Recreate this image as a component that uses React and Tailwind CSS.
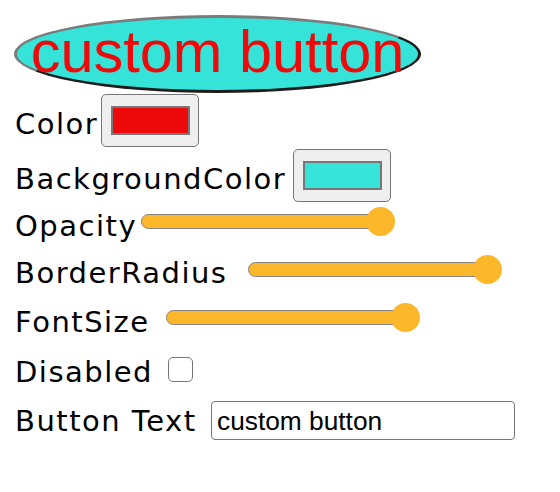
import React, { useState } from 'react';

const labelCls =
  "shrink-0 text-[29px] leading-[34px] tracking-[1.5px] text-black font-['DejaVu_Sans',sans-serif]";

const ColorBox = ({ value, className }) => (
  <div
    className={`flex h-[53px] w-[98px] shrink-0 items-center justify-center rounded-[5px] border-[1.5px] border-[#767676] bg-[#efefef] ${className}`}
  >
    <div className="h-[29px] w-[79px] border-2 border-[#777777]" style={{ background: value }} />
  </div>
);

const Slider = ({ className }) => (
  <div className={`flex h-[29px] w-[254px] shrink-0 items-center ${className}`}>
    <div className="h-[15px] flex-1 rounded-full border-[1.5px] border-[#838383] bg-[#fcb82a]" />
    <div className="-ml-[14.5px] h-[29px] w-[29px] shrink-0 rounded-full bg-[#fcb82a]" />
  </div>
);

const App = () => {
  const [text, setText] = useState('custom button');

  return (
    <div className="w-[560px] h-[492px] bg-white">
      <div className="pl-[14px] pt-[15px] mb-px">
        <button className="flex h-[78px] w-[407px] items-center justify-center rounded-[50%] border-[3px] border-t-[#7b7b7b] border-l-[#7b7b7b] border-r-[#1c1c1c] border-b-[#1c1c1c] bg-[#35e3d8] pb-[4px] text-[59.5px] leading-[66px] text-[#ee0a0a] font-['Liberation_Sans',Arial,sans-serif]">
          {text}
        </button>
      </div>

      <div className="pl-[15px]">
        <div className="flex h-[54px] items-start">
          <span className={`${labelCls} mt-[13px] w-[86px]`}>Color</span>
          <ColorBox value="#ee0a0a" />
        </div>

        <div className="flex h-[54px] items-start">
          <span className={`${labelCls} mt-[14px] w-[278px]`}>BackgroundColor</span>
          <ColorBox value="#35e3d8" className="mt-px" />
        </div>

        <div className="flex h-[47px] items-start">
          <span className={`${labelCls} mt-[7px] w-[126px]`}>Opacity</span>
          <Slider className="mt-[5px]" />
        </div>

        <div className="flex h-[48px] items-start">
          <span className={`${labelCls} mt-[7px] w-[233px]`}>BorderRadius</span>
          <Slider className="mt-[6px]" />
        </div>

        <div className="flex h-[48px] items-start">
          <span className={`${labelCls} mt-[8px] w-[151px]`}>FontSize</span>
          <Slider className="mt-[6px]" />
        </div>

        <div className="flex h-[47px] items-start">
          <span className={`${labelCls} mt-[10px] w-[153px]`}>Disabled</span>
          <div className="mt-[12px] h-[25px] w-[25px] shrink-0 rounded-[5px] border-[1.5px] border-[#767676] bg-white" />
        </div>

        <div className="flex h-[50px] items-start">
          <span className={`${labelCls} mt-[12px] w-[196px]`}>Button Text</span>
          <input
            value={text}
            onChange={(e) => setText(e.target.value)}
            className="mt-[9px] h-[39px] w-[304px] rounded-[4px] border-[1.5px] border-[#767676] bg-white pl-[5px] pt-[3px] pb-0 text-[26.3px] text-black outline-none font-['Liberation_Sans',Arial,sans-serif]"
          />
        </div>
      </div>
    </div>
  );
};

export default App;
